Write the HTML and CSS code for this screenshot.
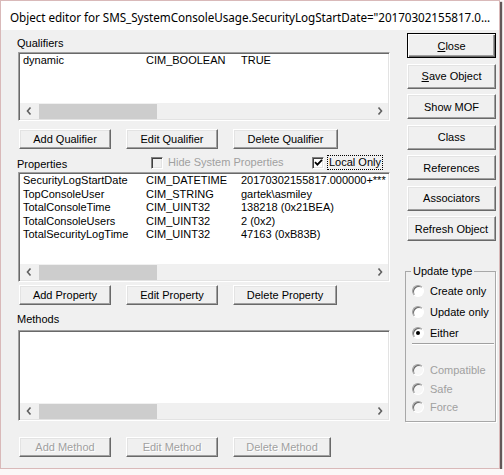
FILE: index.html
```html
<!DOCTYPE html>
<html>
<head>
<meta charset="utf-8">
<title>Object editor</title>
<link rel="stylesheet" href="styles.css">
</head>
<body>
<div class="window">
  <div class="titlebar">Object editor for SMS_SystemConsoleUsage.SecurityLogStartDate="20170302155817.0...</div>
  <div class="client">
    <div class="main">
      <div class="label lbl-qual">Qualifiers</div>
      <div class="listbox lb-qual">
        <div class="rows">
          <div class="row"><span class="c1">dynamic</span><span class="c2">CIM_BOOLEAN</span><span class="c3">TRUE</span></div>
        </div>
        <div class="hscroll">
          <span class="arrow"><svg width="6" height="8" viewBox="0 0 6 8"><polyline points="4.5,0.5 1.5,4 4.5,7.5" fill="none" stroke="#606060" stroke-width="1.6"/></svg></span>
          <span class="thumb"></span>
          <span class="arrow arrow-r"><svg width="6" height="8" viewBox="0 0 6 8"><polyline points="1.5,0.5 4.5,4 1.5,7.5" fill="none" stroke="#606060" stroke-width="1.6"/></svg></span>
        </div>
      </div>
      <div class="btnrow row-qual">
        <button class="btn w-add">Add Qualifier</button>
        <button class="btn w-edit">Edit Qualifier</button>
        <button class="btn w-delq">Delete Qualifier</button>
      </div>

      <div class="prophead">
        <div class="label lbl-props">Properties</div>
        <div class="check check-hide disabled">
          <span class="box"></span>
          <span class="ctext">Hide System Properties</span>
        </div>
        <div class="check check-local">
          <span class="box on"><svg width="9" height="9" viewBox="0 0 9 9"><polyline points="1,4.2 3.4,6.6 8,1.8" fill="none" stroke="#000" stroke-width="1.8"/></svg></span>
          <span class="ctext focus">Local Only</span>
        </div>
      </div>
      <div class="listbox lb-props">
        <div class="rows">
          <div class="row"><span class="c1">SecurityLogStartDate</span><span class="c2">CIM_DATETIME</span><span class="c3">20170302155817.000000+***</span></div>
          <div class="row"><span class="c1">TopConsoleUser</span><span class="c2">CIM_STRING</span><span class="c3">gartek\asmiley</span></div>
          <div class="row"><span class="c1">TotalConsoleTime</span><span class="c2">CIM_UINT32</span><span class="c3">138218 (0x21BEA)</span></div>
          <div class="row"><span class="c1">TotalConsoleUsers</span><span class="c2">CIM_UINT32</span><span class="c3">2 (0x2)</span></div>
          <div class="row"><span class="c1">TotalSecurityLogTime</span><span class="c2">CIM_UINT32</span><span class="c3">47163 (0xB83B)</span></div>
        </div>
        <div class="hscroll">
          <span class="arrow"><svg width="6" height="8" viewBox="0 0 6 8"><polyline points="4.5,0.5 1.5,4 4.5,7.5" fill="none" stroke="#606060" stroke-width="1.6"/></svg></span>
          <span class="thumb"></span>
          <span class="arrow arrow-r"><svg width="6" height="8" viewBox="0 0 6 8"><polyline points="1.5,0.5 4.5,4 1.5,7.5" fill="none" stroke="#606060" stroke-width="1.6"/></svg></span>
        </div>
      </div>
      <div class="btnrow row-props">
        <button class="btn w-add">Add Property</button>
        <button class="btn w-edit">Edit Property</button>
        <button class="btn w-delp">Delete Property</button>
      </div>

      <div class="label lbl-meth">Methods</div>
      <div class="listbox lb-meth">
        <div class="rows"></div>
        <div class="hscroll">
          <span class="arrow"><svg width="6" height="8" viewBox="0 0 6 8"><polyline points="4.5,0.5 1.5,4 4.5,7.5" fill="none" stroke="#606060" stroke-width="1.6"/></svg></span>
          <span class="thumb"></span>
          <span class="arrow arrow-r"><svg width="6" height="8" viewBox="0 0 6 8"><polyline points="1.5,0.5 4.5,4 1.5,7.5" fill="none" stroke="#606060" stroke-width="1.6"/></svg></span>
        </div>
      </div>
      <div class="btnrow row-meth">
        <button class="btn w-add" disabled>Add Method</button>
        <button class="btn w-edit" disabled>Edit Method</button>
        <button class="btn w-delm" disabled>Delete Method</button>
      </div>
    </div>

    <div class="side">
      <div class="sidebtns">
        <button class="btn sbtn default"><u>C</u>lose</button>
        <button class="btn sbtn"><u>S</u>ave Object</button>
        <button class="btn sbtn">Show MOF</button>
        <button class="btn sbtn">Class</button>
        <button class="btn sbtn">References</button>
        <button class="btn sbtn">Associators</button>
        <button class="btn sbtn">Refresh Object</button>
      </div>
      <fieldset class="group">
        <legend>Update type</legend>
        <div class="radios first">
          <div class="radio"><span class="dot"></span><span>Create only</span></div>
          <div class="radio"><span class="dot"></span><span>Update only</span></div>
          <div class="radio"><span class="dot on"></span><span>Either</span></div>
        </div>
        <div class="sep"></div>
        <div class="radios second disabled">
          <div class="radio"><span class="dot"></span><span>Compatible</span></div>
          <div class="radio"><span class="dot"></span><span>Safe</span></div>
          <div class="radio"><span class="dot"></span><span>Force</span></div>
        </div>
      </fieldset>
    </div>
  </div>
</div>
</body>
</html>
```

FILE: styles.css
```css
* { box-sizing: border-box; }

body {
  margin: 0;
  background: #fbf7f7;
  font-family: "Liberation Sans", Arial, sans-serif;
  font-size: 11px;
  color: #000;
}

/* dialog frame */
.window {
  width: 500px;
  height: 469px;
  border: 1px solid #d9b9b9;
  background: #f0f0f0;
  box-shadow: 2px 2px 1px rgba(70, 60, 60, 0.85);
  display: flex;
  flex-direction: column;
}

.titlebar {
  height: 29px;
  flex: none;
  background: #fff;
  padding-left: 9px;
  font-family: "Noto Sans", "Open Sans", sans-serif;
  font-size: 11.7px;
  letter-spacing: -0.05px;
  line-height: 32px;
  white-space: nowrap;
}

.client {
  flex: 1;
  display: flex;
  padding-left: 16px;
}

/* left column */
.main {
  width: 374px;
  display: flex;
  flex-direction: column;
}

.label {
  line-height: 13px;
  height: 13px;
}

.lbl-qual { margin-top: 7px; }
.lbl-meth { margin-top: 8px; }

.listbox {
  margin-left: 1px;
  width: 372px;
  background: #fff;
  border: 1px solid;
  border-color: #a0a0a0 #fff #fff #a0a0a0;
  box-shadow: inset 1px 1px 0 #696969, inset -1px -1px 0 #e3e3e3;
  padding: 1px;
  display: flex;
  flex-direction: column;
  overflow: hidden;
}

.lb-qual { margin-top: 2px; height: 69px; }
.lb-props { margin-top: 2px; height: 110px; }
.lb-meth { margin-top: 4px; height: 91px; }

.rows {
  flex: 1;
  overflow: hidden;
  padding-left: 3px;
}

.row {
  display: flex;
  line-height: 13.5px;
  white-space: nowrap;
}

.c1 { width: 123px; flex: none; }
.c2 { width: 95px; flex: none; }
.c3 { flex: none; }

/* horizontal scroll bar */
.hscroll {
  height: 16px;
  flex: none;
  background: #f0f0f0;
  display: flex;
  align-items: flex-end;
}

.arrow {
  width: 17px;
  height: 16px;
  flex: none;
  display: flex;
  align-items: center;
  justify-content: center;
}

.arrow-r { margin-left: auto; }

.thumb {
  margin-left: 2px;
  width: 118px;
  height: 15px;
  background: #cdcdcd;
}

/* push buttons */
.btn {
  font-family: "Liberation Sans", Arial, sans-serif;
  font-size: 11px;
  color: #000;
  background: #f0f0f0;
  border: 1px solid;
  border-color: #fff #696969 #696969 #fff;
  box-shadow: inset -1px -1px 0 #a0a0a0, inset 1px 1px 0 #e3e3e3;
  padding: 0;
  margin: 0;
  height: 20px;
  text-align: center;
}

.btn:disabled {
  color: #a0a0a0;
  text-shadow: 1px 1px 0 #fff;
}

.btn u { text-decoration: underline; }

.btnrow {
  display: flex;
  gap: 15px;
  margin-left: 2px;
}

.row-qual { margin-top: 8px; }
.row-props { margin-top: 3px; }
.row-meth { margin-top: 16px; }

.w-add { width: 92px; }
.w-edit { width: 92px; }
.w-delq { width: 105px; }
.w-delp { width: 104px; }
.w-delm { width: 98px; }

/* properties header with check boxes */
.prophead {
  display: flex;
  align-items: center;
  height: 15px;
  margin-top: 6px;
}

.lbl-props {
  width: 134px;
  align-self: flex-end;
  margin-bottom: -1px;
}

.check {
  display: flex;
  align-items: center;
}

.check-hide { width: 161px; }

.box {
  width: 12px;
  height: 12px;
  flex: none;
  background: #fff;
  border: 1px solid;
  border-color: #808080 #fff #fff #808080;
  box-shadow: inset 1px 1px 0 #404040, inset -1px -1px 0 #e3e3e3;
  display: flex;
  align-items: center;
  justify-content: center;
}

.check.disabled .box { background: #f0f0f0; }
.check.disabled .ctext { color: #a0a0a0; }

.ctext {
  margin-left: 5px;
  line-height: 13px;
}

.focus {
  margin-left: 4px;
  padding: 0 1px;
  outline: 1px dotted #000;
  line-height: 13px;
}

/* right column */
.side {
  width: 91px;
  margin-left: 14px;
  padding-top: 3px;
  display: flex;
  flex-direction: column;
}

.sidebtns {
  display: flex;
  flex-direction: column;
  gap: 5.5px;
}

.sbtn {
  width: 89px;
  height: 25px;
  margin-left: 2px;
}

.sbtn.default {
  border: 1px solid #000;
  box-shadow: inset 1px 1px 0 #fff, inset -1px -1px 0 #696969, inset -2px -2px 0 #a0a0a0;
}

/* update type group */
.group {
  margin: 24px 0 0 0;
  padding: 0 0 4px 0;
  border: 1px solid #a8a8a8;
  box-shadow: 1px 1px 0 #fff;
  min-width: 0;
}

.group legend {
  padding: 0 2px;
  margin-left: 5px;
  line-height: 13px;
}

.radios.first { padding-top: 2px; }
.radios.second { margin-top: 16px; }

.radios.first .radio { height: 21px; }
.radios.second .radio { height: 18.5px; }

.radio {
  display: flex;
  align-items: center;
  padding-left: 6px;
}

.radio .dot {
  width: 12px;
  height: 12px;
  flex: none;
  border-radius: 50%;
  background: #fff;
  border: 1px solid;
  border-color: #a0a0a0 #fff #fff #a0a0a0;
  box-shadow: inset 1px 1px 0 #696969;
  margin-right: 6px;
  display: flex;
  align-items: center;
  justify-content: center;
}

.radio .dot.on::after {
  content: "";
  width: 4px;
  height: 4px;
  border-radius: 50%;
  background: #000;
}

.radios.disabled .radio { color: #a0a0a0; }
.radios.disabled .dot { background: #f7f7f7; }

.sep {
  height: 2px;
  margin: 0 1px 0 6px;
  border-top: 1px solid #a0a0a0;
  border-bottom: 1px solid #fff;
}
```
